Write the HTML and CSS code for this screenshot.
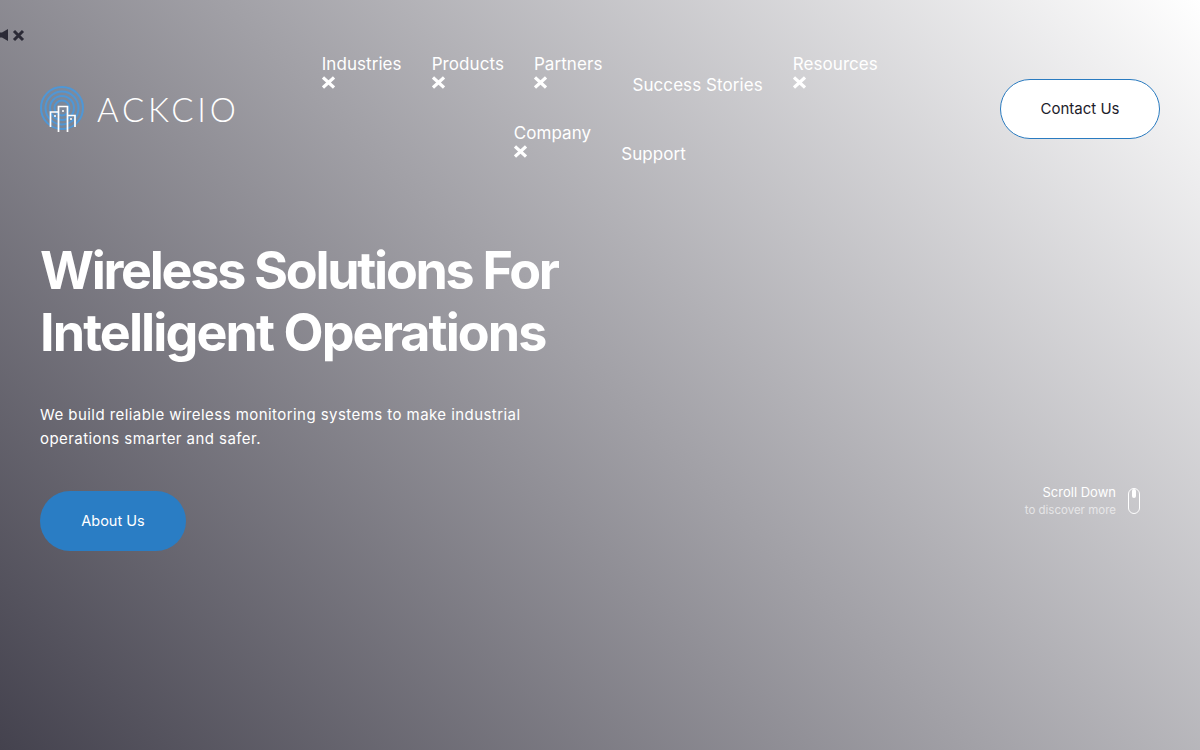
FILE: index.html
```html
<!DOCTYPE html>
<html lang="en">
<head>
    <meta charset="UTF-8">
    <meta name="viewport" content="width=device-width, initial-scale=1.0">
    <title>Ackcio</title>
    <link rel="stylesheet" href="styles.css">
</head>
<body>
    <!-- Sound toggle -->
    <button class="mute-btn" type="button" aria-label="Unmute">
        <svg width="26" height="14" viewBox="0 0 26 14">
            <path d="M-2 4.500H2L8 1V13L2 9.500H-2Z" fill="#2b2a36"/>
            <path d="M14 3L23 12M23 3L14 12" stroke="#2b2a36" stroke-width="3" fill="none"/>
        </svg>
    </button>

    <header class="site-header">
        <a class="logo" href="#">
            <svg class="logo-mark" width="46" height="50" viewBox="0 0 46 50">
                <circle cx="22" cy="24" r="22" fill="#4a8fcf" fill-opacity="0.18"/>
                <g fill="none" stroke="#4f97d6" stroke-width="2">
                    <circle cx="22" cy="24" r="21"/>
                    <circle cx="22" cy="24" r="16.500"/>
                    <circle cx="22" cy="24" r="12"/>
                    <circle cx="22" cy="24" r="7.500"/>
                </g>
                <path d="M10.500 43V28H18.500M18.500 48V22.500H27.500V48M27.500 31.500H35V43" fill="none" stroke="#fff" stroke-width="1.700"/>
                <path d="M14 32h2M22 27h2M30 35h2" stroke="#fff" stroke-width="1.400"/>
            </svg>
            <span class="logo-text">ACKCIO</span>
        </a>

        <nav class="main-nav">
            <a href="#">Industries<span class="nav-icon"><svg width="13" height="13" viewBox="0 0 13 13"><path d="M1 1.500L12 11.500M12 1.500L1 11.500"/></svg></span></a>
            <a href="#">Products<span class="nav-icon"><svg width="13" height="13" viewBox="0 0 13 13"><path d="M1 1.500L12 11.500M12 1.500L1 11.500"/></svg></span></a>
            <a href="#">Partners<span class="nav-icon"><svg width="13" height="13" viewBox="0 0 13 13"><path d="M1 1.500L12 11.500M12 1.500L1 11.500"/></svg></span></a>
            <a href="#">Success Stories</a>
            <a href="#">Resources<span class="nav-icon"><svg width="13" height="13" viewBox="0 0 13 13"><path d="M1 1.500L12 11.500M12 1.500L1 11.500"/></svg></span></a>
            <a href="#">Company<span class="nav-icon"><svg width="13" height="13" viewBox="0 0 13 13"><path d="M1 1.500L12 11.500M12 1.500L1 11.500"/></svg></span></a>
            <a href="#">Support</a>
        </nav>

        <a class="contact-btn" href="#">Contact Us</a>
    </header>

    <section class="hero">
        <div class="hero-copy">
            <h1>Wireless Solutions For<br><span class="title-line">Intelligent Operations</span></h1>
            <p>We build reliable wireless monitoring systems to make industrial operations smarter and safer.</p>
            <a class="about-btn" href="#">About Us</a>
        </div>
        <div class="scroll-hint">
            <div class="scroll-text">
                <span class="scroll-title">Scroll Down</span>
                <span class="scroll-sub">to discover more</span>
            </div>
            <div class="mouse"><span class="mouse-wheel"></span></div>
        </div>
    </section>
</body>
</html>
```

FILE: styles.css
```css
body {
    font-family: Inter, "Liberation Sans", sans-serif;
    background: linear-gradient(45deg, #44424e 0%, #ffffff 100%);
    color: white;
    margin: 0;
    height: 750px;
    overflow: hidden;
}
a {
    color: inherit;
    text-decoration: none;
}

/* Sound toggle */
.mute-btn {
    position: absolute;
    top: 28px;
    left: 0;
    padding: 0;
    border: none;
    background: none;
    line-height: 0;
}

/* Header */
.site-header {
    display: flex;
    align-items: center;
    justify-content: space-between;
    height: 118px;
    padding: 50px 40px 0;
}
.logo {
    display: flex;
    align-items: center;
    gap: 11px;
}
.logo-mark {
    flex: none;
}
.logo-text {
    font-family: Lato, sans-serif;
    font-weight: 300;
    font-size: 33px;
    letter-spacing: 3.800px;
    line-height: 1;
}
.main-nav {
    display: flex;
    flex-wrap: wrap;
    justify-content: center;
    align-items: last baseline;
    column-gap: 30px;
    row-gap: 27px;
    width: 600px;
    margin-right: 40px;
    font-size: 17px;
    line-height: 21px;
    letter-spacing: 0.070px;
}
.nav-icon {
    display: block;
    height: 21px;
    line-height: 21px;
}
.nav-icon svg {
    fill: none;
    stroke: white;
    stroke-width: 3.200;
    vertical-align: 2px;
}
.contact-btn {
    display: flex;
    align-items: center;
    justify-content: center;
    width: 158px;
    height: 56px;
    padding-bottom: 2px;
    background: white;
    border: 1px solid #2a7bc0;
    border-radius: 30px;
    color: #1d1c2b;
    font-size: 15px;
}

/* Hero */
.hero {
    display: flex;
    justify-content: space-between;
    padding: 72px 60px 0 40px;
}
.hero h1 {
    margin: 0;
    font-size: 52px;
    font-weight: 700;
    line-height: 62px;
    letter-spacing: -2.280px;
}
.title-line {
    letter-spacing: -1.900px;
}
.hero p {
    width: 500px;
    margin: 39px 0 40px;
    font-size: 15px;
    line-height: 24px;
    letter-spacing: 0.440px;
}
.about-btn {
    display: flex;
    align-items: center;
    justify-content: center;
    width: 146px;
    height: 58px;
    padding-bottom: 2px;
    background: #2a7dc4;
    border-radius: 30px;
    font-size: 14.500px;
}
.scroll-hint {
    display: flex;
    align-items: center;
    gap: 12px;
    align-self: flex-end;
    margin-bottom: 33px;
}
.scroll-text {
    display: flex;
    flex-direction: column;
    align-items: flex-end;
    gap: 2px;
}
.scroll-title {
    font-size: 13px;
    line-height: 17px;
}
.scroll-sub {
    font-size: 11.500px;
    line-height: 15px;
    opacity: 0.6;
}
.mouse {
    width: 10px;
    height: 24px;
    border: 1px solid white;
    border-radius: 6px;
    display: flex;
    justify-content: center;
}
.mouse-wheel {
    width: 4px;
    height: 9px;
    background: white;
    border-radius: 2px;
}
```
